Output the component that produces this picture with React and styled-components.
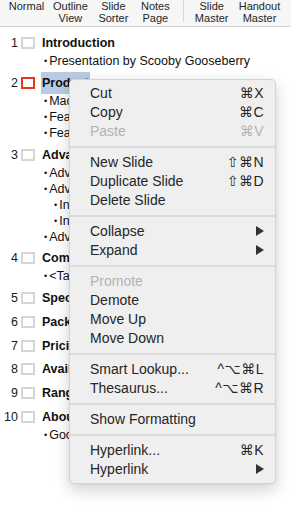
import React from "react";
import styled, { createGlobalStyle } from "styled-components";

const GlobalStyle = createGlobalStyle`
  html, body {
    margin: 0;
    padding: 0;
    background: #ffffff;
    font-family: "Liberation Sans", Arial, sans-serif;
  }
`;

const Page = styled.div`
  position: relative;
  width: 291px;
  height: 506px;
  overflow: hidden;
  background: #ffffff;
`;

const Toolbar = styled.div`
  display: flex;
  height: 26px;
  background: #f6f6f6;
  border-bottom: 1px solid #d2d2d2;
  overflow: hidden;
`;

const ViewButton = styled.div`
  flex: 0 0 ${({ w }) => w}px;
  display: flex;
  justify-content: center;
  font-size: 11px;
  line-height: 12px;
  color: #262626;
  text-align: center;
  white-space: nowrap;
`;

const ToolSep = styled.div`
  flex: 0 0 23px;
  display: flex;
  justify-content: center;

  &::after {
    content: "";
    width: 1px;
    height: 22px;
    background: #dadada;
  }
`;

const Outline = styled.div`
  padding-top: 6px;
`;

const Slide = styled.div`
  margin-bottom: 3.75px;
`;

const TitleRow = styled.div`
  display: flex;
  align-items: center;
  height: 20px;
`;

const Num = styled.span`
  width: 18px;
  text-align: right;
  font-size: 12.5px;
  color: #1a1a1a;
`;

const Thumb = styled.span`
  box-sizing: border-box;
  width: 14px;
  height: 12px;
  margin: 0 7px 0 3px;
  border: 2px solid ${({ active }) => (active ? "#e2391a" : "#d6d6d6")};
  background: #ffffff;
`;

const Title = styled.span`
  font-size: 12.5px;
  font-weight: bold;
  color: #111;
  white-space: nowrap;
`;

const Selected = styled.span`
  background: #b8cbe4;
  padding: 4px 1px 4px 1px;
  margin-left: -1px;
`;

const Bullet = styled.div`
  height: 16px;
  line-height: 16px;
  padding-left: ${({ level }) => (level === 2 ? 54 : 44)}px;
  font-size: 12.5px;
  color: #111;
  white-space: nowrap;

  &::before {
    content: "•";
    font-size: 9px;
    margin-right: 2px;
    position: relative;
    top: -1px;
  }
`;

const Menu = styled.div`
  position: absolute;
  left: 69px;
  top: 79px;
  width: 207px;
  box-sizing: border-box;
  padding: 3.5px 0 4px;
  background: #efefef;
  border: 1px solid #d4d4d4;
  border-radius: 5px;
  box-shadow: 0 6px 16px rgba(0, 0, 0, 0.18), 0 0 2px rgba(0, 0, 0, 0.08);
`;

const Item = styled.div`
  display: flex;
  align-items: center;
  justify-content: space-between;
  height: 19px;
  padding: 0 11px 0 20px;
  font-size: 14px;
  color: ${({ disabled }) => (disabled ? "#b3b3b3" : "#262626")};
`;

const Shortcut = styled.span`
  font-family: "Liberation Sans", "DejaVu Sans", sans-serif;
  font-size: 14px;
  letter-spacing: 0.5px;
`;

const Separator = styled.div`
  height: 2px;
  margin: 5px 0 5px;
  background: #dcdcdc;
`;

const Arrow = () => (
  <svg width="8" height="10" viewBox="0 0 8 10">
    <path d="M0 0 L8 5 L0 10 Z" fill="#333" />
  </svg>
);

const slides = [
  { title: "Introduction", subs: [[1, "Presentation by Scooby Gooseberry"]] },
  {
    title: "Product",
    selected: "Product",
    active: true,
    subs: [
      [1, "Macintosh edition"],
      [1, "Features overview"],
      [1, "Features in detail"],
    ],
  },
  {
    title: "Advanced Topics",
    subs: [
      [1, "Advanced layout"],
      [1, "Advanced styles"],
      [2, "Indents"],
      [2, "Indents again"],
      [1, "Advanced tables"],
    ],
  },
  { title: "Comparison", subs: [[1, "<Table>"]] },
  { title: "Specifications", subs: [] },
  { title: "Packaging", subs: [] },
  { title: "Pricing", subs: [] },
  { title: "Availability", subs: [] },
  { title: "Range", subs: [] },
  { title: "About Us", subs: [[1, "Good to know"]] },
];

const menu = [
  [
    { label: "Cut", key: "⌘X" },
    { label: "Copy", key: "⌘C" },
    { label: "Paste", key: "⌘V", disabled: true },
  ],
  [
    { label: "New Slide", key: "⇧⌘N" },
    { label: "Duplicate Slide", key: "⇧⌘D" },
    { label: "Delete Slide" },
  ],
  [
    { label: "Collapse", sub: true },
    { label: "Expand", sub: true },
  ],
  [
    { label: "Promote", disabled: true },
    { label: "Demote" },
    { label: "Move Up" },
    { label: "Move Down" },
  ],
  [
    { label: "Smart Lookup...", key: "^⌥⌘L" },
    { label: "Thesaurus...", key: "^⌥⌘R" },
  ],
  [{ label: "Show Formatting" }],
  [
    { label: "Hyperlink...", key: "⌘K" },
    { label: "Hyperlink", sub: true },
  ],
];

export default function App() {
  return (
    <Page>
      <GlobalStyle />
      <Toolbar>
        <ViewButton w={53}>Normal</ViewButton>
        <ViewButton w={33}>
          Outline
          <br />
          View
        </ViewButton>
        <ViewButton w={51}>
          Slide
          <br />
          Sorter
        </ViewButton>
        <ViewButton w={33}>
          Notes
          <br />
          Page
        </ViewButton>
        <ToolSep />
        <ViewButton w={28}>
          Slide
          <br />
          Master
        </ViewButton>
        <ViewButton w={62}>
          Handout
          <br />
          Master
        </ViewButton>
        <ViewButton w={36}>
          Notes
          <br />
          Master
        </ViewButton>
      </Toolbar>

      <Outline>
        {slides.map((s, i) => (
          <Slide key={i}>
            <TitleRow>
              <Num>{i + 1}</Num>
              <Thumb active={s.active} />
              <Title>
                {s.selected ? (
                  <>
                    <Selected>{s.selected}</Selected>
                    {s.title.slice(s.selected.length)}
                  </>
                ) : (
                  s.title
                )}
              </Title>
            </TitleRow>
            {s.subs.map(([level, text], j) => (
              <Bullet key={j} level={level}>
                {text}
              </Bullet>
            ))}
          </Slide>
        ))}
      </Outline>

      <Menu>
        {menu.map((group, g) => (
          <React.Fragment key={g}>
            {g > 0 && <Separator />}
            {group.map((it) => (
              <Item key={it.label + g} disabled={it.disabled}>
                <span>{it.label}</span>
                {it.key && <Shortcut>{it.key}</Shortcut>}
                {it.sub && <Arrow />}
              </Item>
            ))}
          </React.Fragment>
        ))}
      </Menu>
    </Page>
  );
}
